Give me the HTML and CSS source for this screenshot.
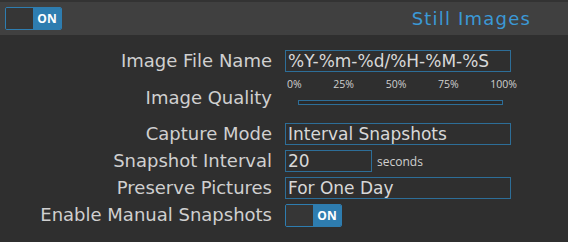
FILE: index.html
```html
<!DOCTYPE html>
<html lang="en">
  <head>
    <meta charset="UTF-8" />
    <title>Still Images</title>
    <link rel="stylesheet" href="styles.css">
  </head>
  <body>
    <div class="section">
      <div class="section-head">
        <div class="toggle">
          <span class="toggle-off"></span>
          <span class="toggle-on">ON</span>
        </div>
        <h2 class="section-title">Still Images</h2>
      </div>

      <div class="settings">
        <label class="field-label">Image File Name</label>
        <div class="field">
          <input class="text-input wide" type="text" value="%Y-%m-%d/%H-%M-%S" />
        </div>

        <label class="field-label row-quality">Image Quality</label>
        <div class="field quality">
          <div class="scale">
            <span>0%</span><span>25%</span><span>50%</span><span>75%</span><span>100%</span>
          </div>
          <div class="slider"></div>
        </div>

        <label class="field-label">Capture Mode</label>
        <div class="field">
          <input class="text-input wide" type="text" value="Interval Snapshots" />
        </div>

        <label class="field-label">Snapshot Interval</label>
        <div class="field">
          <input class="text-input short" type="text" value="20" />
          <span class="unit">seconds</span>
        </div>

        <label class="field-label">Preserve Pictures</label>
        <div class="field">
          <input class="text-input wide" type="text" value="For One Day" />
        </div>

        <label class="field-label">Enable Manual Snapshots</label>
        <div class="field">
          <div class="toggle">
            <span class="toggle-off"></span>
            <span class="toggle-on">ON</span>
          </div>
        </div>
      </div>
    </div>
  </body>
</html>
```

FILE: styles.css
```css
body {
  margin: 0;
  background: #2f2f2f;
  font-family: "DejaVu Sans", sans-serif;
  color: #d0d0d0;
}

.section {
  border-top: 2px solid #333333;
}

.section-head {
  display: flex;
  align-items: center;
  justify-content: space-between;
  height: 33px;
  padding: 0 37px 0 5px;
  background: #404040;
}

.section-title {
  margin: 0;
  font-size: 18px;
  font-weight: normal;
  letter-spacing: 1.2px;
  color: #3b99d6;
}

.toggle {
  display: flex;
  width: 55px;
  height: 21px;
  border: 1px solid #2e7db0;
  border-radius: 2px;
  overflow: hidden;
}

.toggle-off {
  flex: 1;
  background: #363636;
}

.toggle-on {
  width: 28px;
  background: #2e7db0;
  color: #ffffff;
  font-family: "Open Sans", sans-serif;
  font-weight: bold;
  font-size: 12px;
  line-height: 21px;
  text-align: center;
}

.settings {
  display: grid;
  grid-template-columns: 272px 1fr;
  column-gap: 13px;
  row-gap: 5px;
  padding-top: 15px;
}

.field-label {
  text-align: right;
  font-size: 18px;
  line-height: 22px;
  color: #d0d0d0;
}

.row-quality {
  padding: 10px 0 9px;
}

.field {
  display: flex;
  align-items: center;
}

.text-input {
  box-sizing: border-box;
  height: 22px;
  padding: 0 2px;
  background: #2f2f2f;
  border: 1px solid #2d6e98;
  color: #d8d8d8;
  font-family: "DejaVu Sans", sans-serif;
  font-size: 17px;
}

.wide {
  width: 226px;
}

.short {
  width: 87px;
}

.unit {
  margin-left: 5px;
  font-family: "Open Sans", sans-serif;
  font-size: 12px;
  color: #d0d0d0;
}

.quality {
  flex-direction: column;
  align-items: flex-start;
  justify-content: flex-start;
  width: 231px;
}

.scale {
  display: flex;
  justify-content: space-between;
  width: 230px;
  margin-left: 2px;
  font-family: "Open Sans", sans-serif;
  font-size: 10.5px;
  line-height: 14px;
  color: #cfcfcf;
}

.slider {
  box-sizing: border-box;
  width: 205px;
  height: 5px;
  margin: 9px 0 0 13px;
  border: 1px solid #2d6e98;
  background: #2a2a2a;
}
```
